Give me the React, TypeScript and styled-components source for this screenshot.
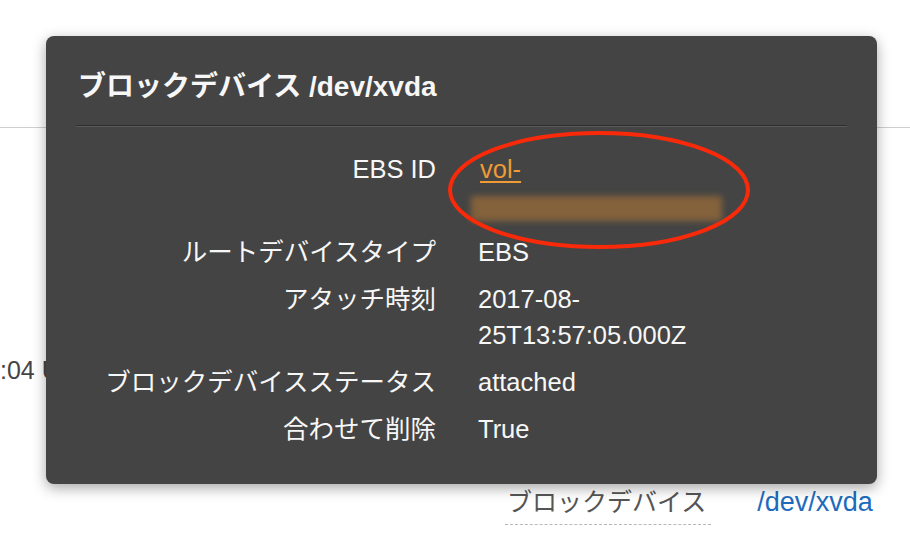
import React, { FC } from 'react';
import styled, { createGlobalStyle } from 'styled-components';

/* Global */

const GlobalStyle = createGlobalStyle`
  html, body {
    margin: 0;
    padding: 0;
    background: #fff;
  }

  body {
    font-family: "Liberation Sans", "Noto Sans CJK JP", sans-serif;
  }
`;

/* Page behind the popover */

const Page = styled.div`
  width: 910px;
  height: 540px;
  position: relative;
  overflow: hidden;
  background: #fff;
`;

const Backdrop = styled.div`
  display: flex;
  flex-direction: column;
  padding-top: 127px;
`;

const Rule = styled.div`
  height: 1px;
  background: #cfcfcf;
`;

const Stamp = styled.div`
  margin-top: 224px;
  font-size: 25px;
  line-height: 36px;
  color: #444;
  white-space: nowrap;
`;

const DeviceRow = styled.div`
  margin-top: 96px;
  margin-left: 505px;
  display: flex;
  align-items: flex-start;
  gap: 46px;
  font-size: 25px;
  line-height: 36px;
`;

const DeviceLabel = styled.span`
  padding: 0 5px 4px 2px;
  color: #555;
  border-bottom: 1px dashed #b8b8b8;
`;

const DeviceLink = styled.a`
  font-size: 27px;
  color: #1e6bbd;
  text-decoration: none;
`;

/* Popover */

const Popover = styled.div`
  position: absolute;
  left: 46px;
  top: 36px;
  width: 831px;
  height: 448px;
  box-sizing: border-box;
  padding: 0 30px;
  background: #444;
  border-radius: 8px;
  box-shadow: 0 4px 14px rgba(0, 0, 0, 0.35);
  color: #f7f7f7;
`;

const Title = styled.div`
  padding: 33px 0 20px 2px;
  font-size: 28px;
  line-height: 36px;
  font-weight: bold;
  white-space: nowrap;
  border-bottom: 1px solid #2f2f2f;
  box-shadow: 0 1px 0 #5a5a5a;
`;

const DetailGrid = styled.div`
  display: grid;
  grid-template-columns: 360px 1fr;
  column-gap: 42px;
  row-gap: 11px;
  margin-top: 25px;
  font-size: 25.5px;
  line-height: 36px;
`;

const Label = styled.div`
  text-align: right;
  white-space: nowrap;
`;

const Value = styled.div`
  display: flex;
  flex-direction: column;
  align-items: flex-start;
`;

const VolumeLink = styled.a`
  margin-left: 2px;
  color: #ee9a35;
  text-decoration: underline;
  text-underline-offset: 3px;
  text-decoration-thickness: 2px;
`;

const Redacted = styled.div`
  width: 251px;
  height: 25px;
  margin: 9px 0 2px -7px;
  background: #84623b;
  filter: blur(3px);
`;

const Highlight = styled.svg`
  position: absolute;
  left: 398px;
  top: 92px;
  pointer-events: none;
`;

/* Data */

interface Detail {
  label: string;
  lines: string[];
}

const details: Detail[] = [
  { label: 'ルートデバイスタイプ', lines: ['EBS'] },
  { label: 'アタッチ時刻', lines: ['2017-08-', '25T13:57:05.000Z'] },
  { label: 'ブロックデバイスステータス', lines: ['attached'] },
  { label: '合わせて削除', lines: ['True'] },
];

/* App */

const App: FC = () => (
  <Page>
    <GlobalStyle />
    <Backdrop>
      <Rule />
      <Stamp>:04 U</Stamp>
      <DeviceRow>
        <DeviceLabel>ブロックデバイス</DeviceLabel>
        <DeviceLink href="#">/dev/xvda</DeviceLink>
      </DeviceRow>
    </Backdrop>

    <Popover>
      <Title>ブロックデバイス /dev/xvda</Title>
      <DetailGrid>
        <Label>EBS ID</Label>
        <Value>
          <VolumeLink href="#">vol-</VolumeLink>
          <Redacted />
        </Value>
        {details.map((d) => (
          <React.Fragment key={d.label}>
            <Label>{d.label}</Label>
            <Value>
              {d.lines.map((line) => (
                <span key={line}>{line}</span>
              ))}
            </Value>
          </React.Fragment>
        ))}
      </DetailGrid>
      <Highlight width="310" height="124" viewBox="0 0 310 124">
        <ellipse cx="155" cy="62" rx="149" ry="57" fill="none" stroke="#f82a0a" strokeWidth="4" />
      </Highlight>
    </Popover>
  </Page>
);

export default App;
